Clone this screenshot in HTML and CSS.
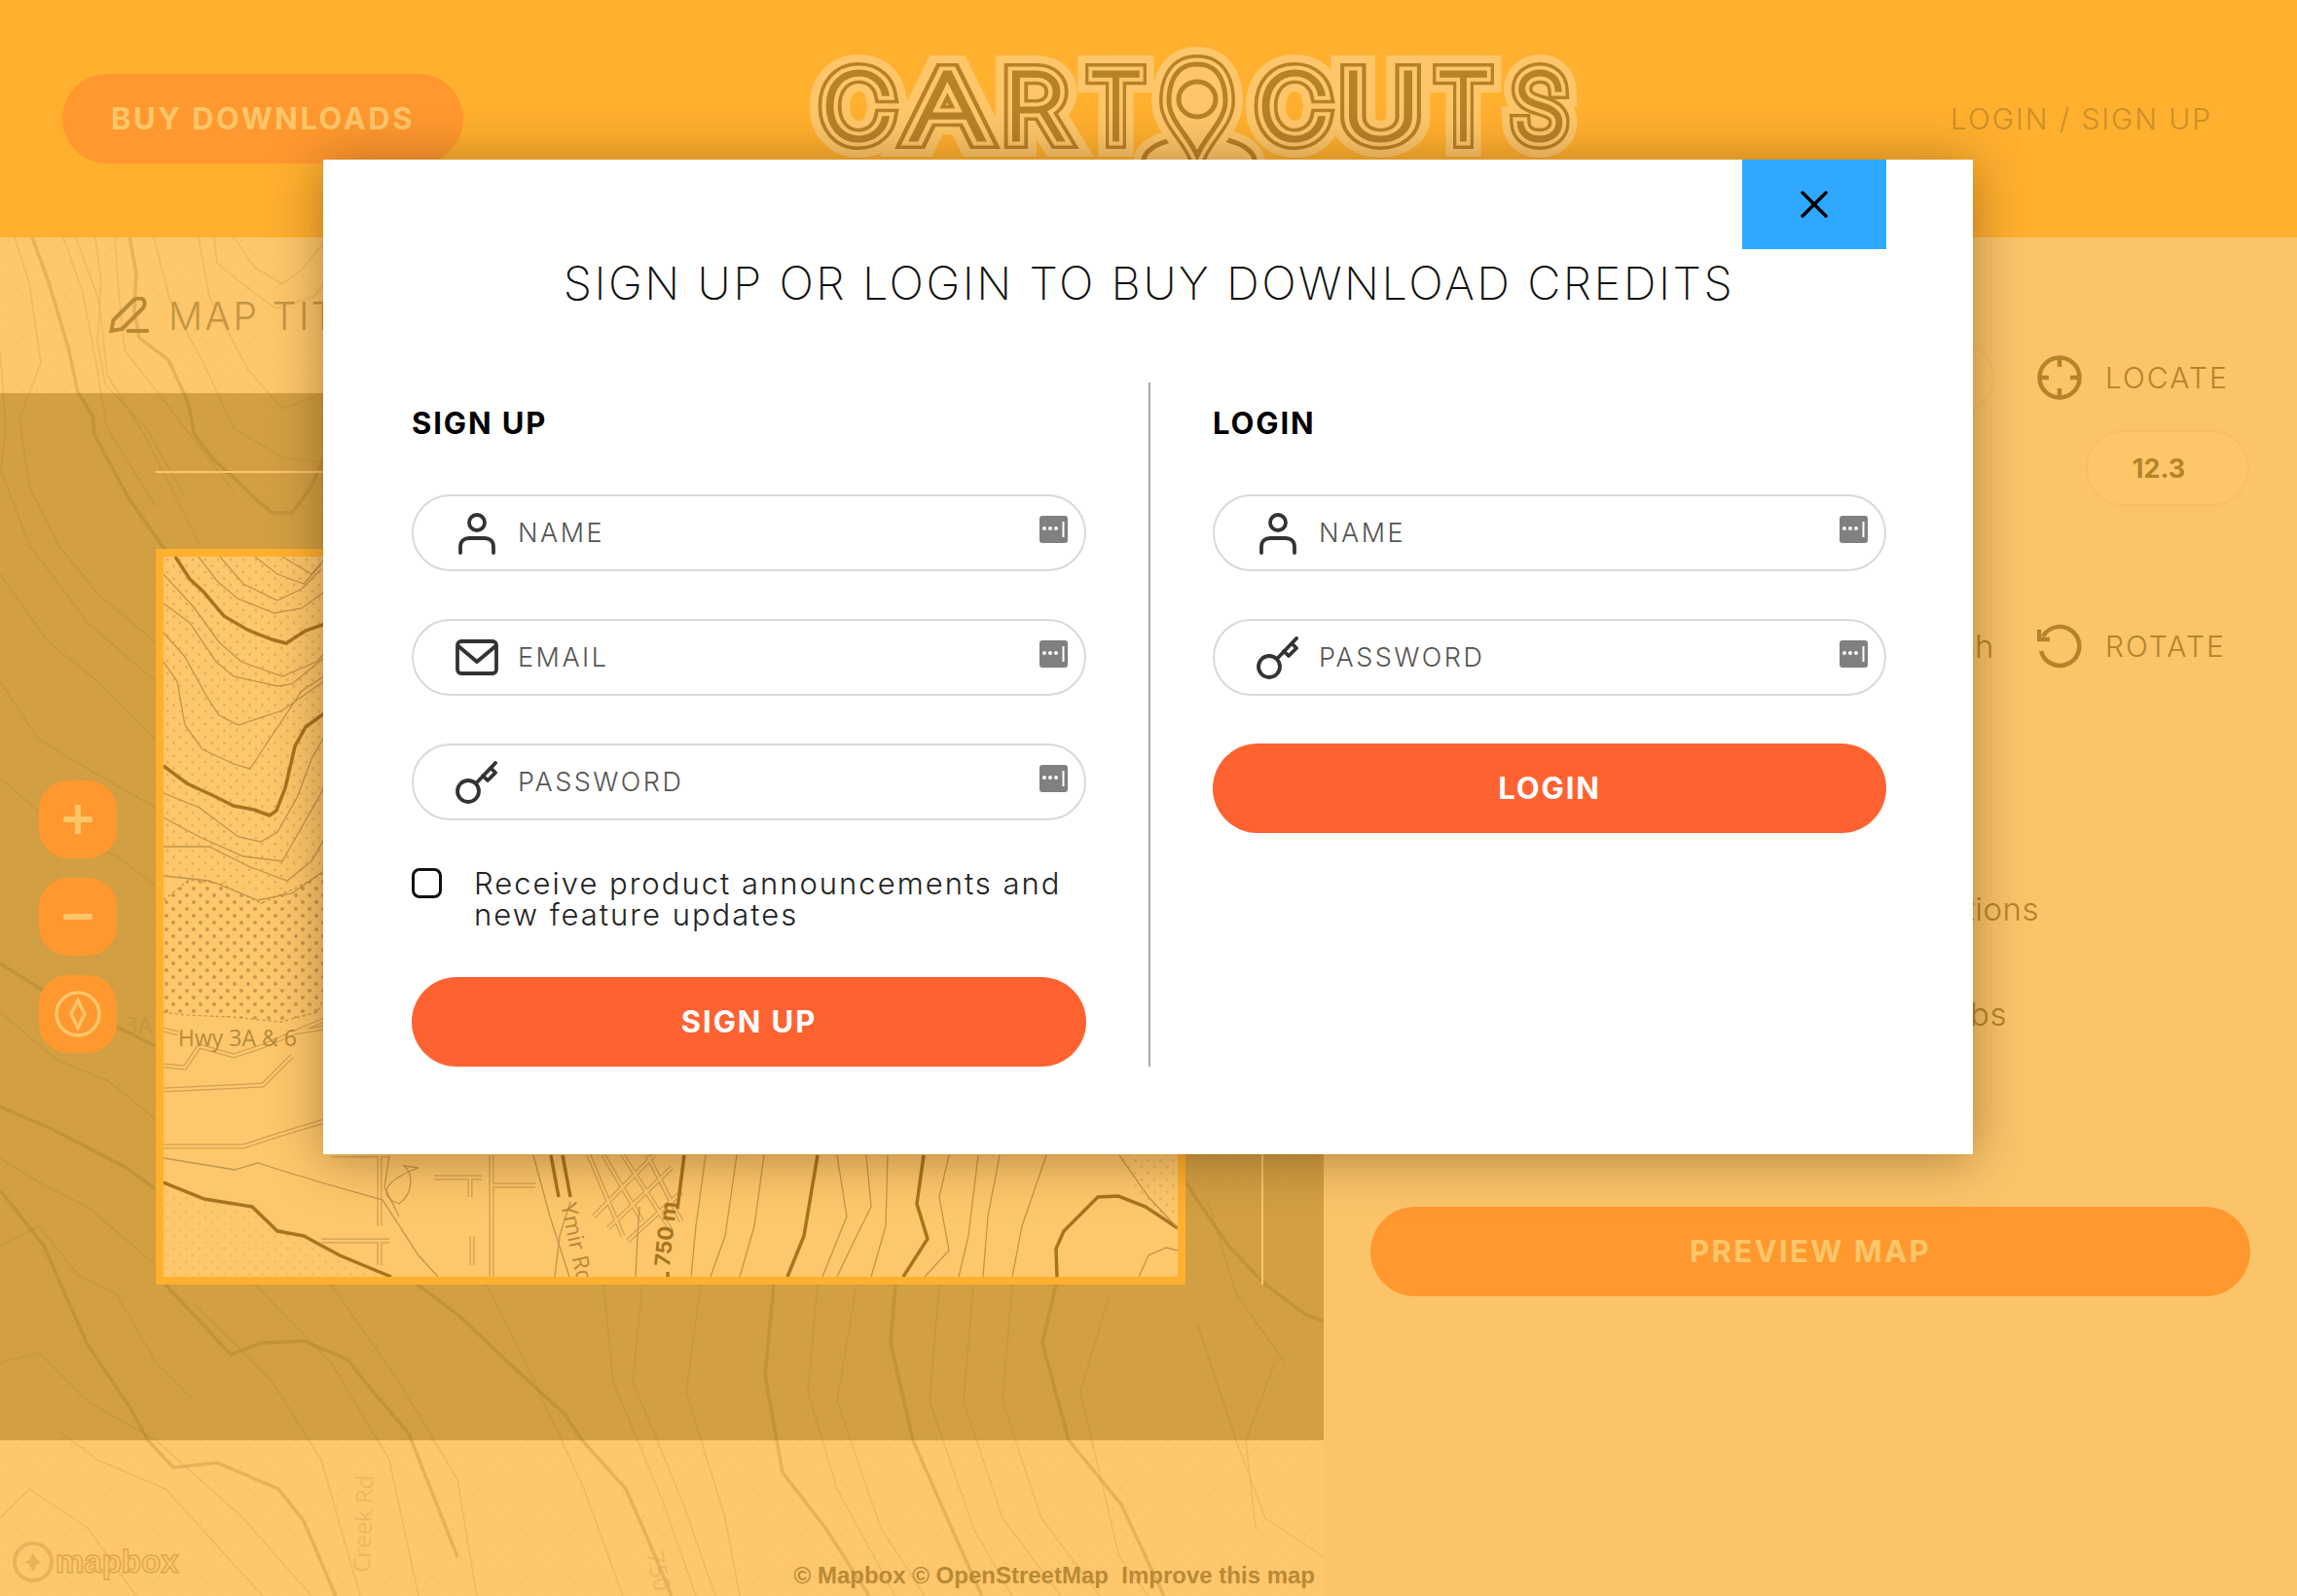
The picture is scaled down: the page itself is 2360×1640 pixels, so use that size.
FILE: index.html
```html
<!DOCTYPE html>
<html lang="en">
<head>
  <meta charset="UTF-8" />
  <title>Cartocuts</title>
  <link rel="stylesheet" href="styles.css">
</head>
<body>
<div class="app">

  <header class="topbar">
    <a class="buy-btn">BUY DOWNLOADS</a>
    <svg class="logo" viewBox="820 40 820 134" role="img" aria-label="Cartocuts">
      <defs>
        <g id="logo-word">
          <text x="844" y="143" textLength="74" lengthAdjust="spacingAndGlyphs">C</text>
          <text x="934" y="143" textLength="79" lengthAdjust="spacingAndGlyphs">A</text>
          <text x="1031" y="143" textLength="64" lengthAdjust="spacingAndGlyphs">R</text>
          <text x="1119" y="143" textLength="55" lengthAdjust="spacingAndGlyphs">T</text>
          <text x="1292" y="143" textLength="74" lengthAdjust="spacingAndGlyphs">C</text>
          <text x="1378" y="143" textLength="81" lengthAdjust="spacingAndGlyphs">U</text>
          <text x="1476" y="143" textLength="55" lengthAdjust="spacingAndGlyphs">T</text>
          <text x="1554" y="143" textLength="56" lengthAdjust="spacingAndGlyphs">S</text>
        </g>
        <path id="logo-pin" d="M1230 66C1204 66 1201 92 1201 104C1201 124 1222 140 1230 160C1238 140 1259 124 1259 104C1259 92 1256 66 1230 66Z"/>
      </defs>
      <ellipse class="ring-halo" cx="1232" cy="168" rx="50" ry="20"/>
      <ellipse class="ring-dark" cx="1232" cy="168" rx="50" ry="20"/>
      <ellipse class="ring-core" cx="1232" cy="168" rx="50" ry="20"/>
      <use href="#logo-word" class="ring-halo"/>
      <use href="#logo-word" class="ring-dark"/>
      <use href="#logo-word" class="ring-light"/>
      <use href="#logo-word" class="ring-line"/>
      <use href="#logo-pin" class="ring-halo"/>
      <use href="#logo-pin" class="ring-dark"/>
      <use href="#logo-pin" class="ring-light"/>
      <use href="#logo-pin" class="ring-line"/>
      <ellipse class="pin-eye" cx="1230" cy="102" rx="19" ry="18"/>
    </svg>
    <a class="login-link">LOGIN / SIGN UP</a>
  </header>

  <div class="workspace">
    <section class="map-col">
      <svg class="map-bg" viewBox="0 244 1360 1396" preserveAspectRatio="none">
        <defs>
          <pattern id="fine-dots" width="14" height="14" patternUnits="userSpaceOnUse">
            <circle cx="3" cy="3" r="1.3" fill="#e8b05a"/>
            <circle cx="10" cy="10" r="1.3" fill="#e8b05a"/>
          </pattern>
        </defs>
        <rect x="0" y="244" width="1360" height="1396" fill="url(#fine-dots)" opacity=".2"/>
        <g class="contour-thick">
          <path d="M33 244L50 290 70 357 80 403 95 427 97 447 133 513 173 570"/>
          <path d="M133 244L140 280 138 320 143 347 173 370 193 413 200 447 220 473 247 497 267 517 280 527 300 527 320 500 340 455"/>
          <path d="M0 1223L45 1280 89 1380 134 1447 152 1480 178 1508 223 1503 286 1530 312 1563 345 1640"/>
          <path d="M170 1320L214 1367 237 1392 268 1380 312 1378 357 1397 375 1420 420 1473 470 1600"/>
          <path d="M429 1320L473 1353 536 1413 580 1453 598 1480 643 1530 665 1580 690 1640"/>
          <path d="M795 1320L786 1413 804 1513 848 1570 893 1640"/>
          <path d="M920 1320L915 1380 938 1480 982 1580 1009 1640"/>
          <path d="M1085 1320L1071 1380 1098 1480 1152 1546 1196 1640"/>
          <path d="M0 1137L53 1160 130 1200 160 1222"/>
          <path d="M0 990L43 1017 110 1050 160 1075"/>
          <path d="M1218 1215L1262 1280 1300 1320 1340 1350 1360 1358"/>
        </g>
        <g class="contour-thin">
          <path d="M15 244L30 290 42 373 20 430 30 500 60 560 100 610 160 660"/>
          <path d="M65 244L85 300 100 380 110 440 160 520"/>
          <path d="M78 244L102 310 110 385 150 450 205 560"/>
          <path d="M98 244L104 290 100 350 108 395 150 440 190 510"/>
          <path d="M118 244L122 300 128 360 175 420 240 505"/>
          <path d="M158 244L175 310 210 375 240 440 290 470 330 475"/>
          <path d="M204 244L215 305 255 380 290 420 330 405"/>
          <path d="M220 244L223 270 247 290 283 317 322 305 340 285"/>
          <path d="M240 244L262 275 290 292 312 275 332 250"/>
          <path d="M0 360L6 440 -4 520"/>
          <path d="M0 480L30 560 90 640 160 700"/>
          <path d="M0 590L50 660 100 700 160 760"/>
          <path d="M0 700L40 760 90 790 160 830"/>
          <path d="M0 800L60 850 120 880 160 910"/>
          <path d="M0 1040L60 1090 110 1110 160 1150"/>
          <path d="M0 1190L40 1215 90 1240 160 1300"/>
          <path d="M0 1280L40 1260 80 1310 120 1330 160 1400 200 1440"/>
          <path d="M0 1400L40 1390 90 1440 160 1480 250 1560 320 1640"/>
          <path d="M60 1470L100 1500 170 1530 270 1640"/>
          <path d="M0 1560L30 1530 90 1570 140 1640"/>
          <path d="M200 1340L280 1420 330 1500 370 1640"/>
          <path d="M262 1320L340 1400 400 1500 430 1640"/>
          <path d="M340 1320L410 1420 470 1520 490 1640"/>
          <path d="M500 1320L540 1400 600 1530 640 1640"/>
          <path d="M620 1320L630 1420 680 1540 715 1640"/>
          <path d="M660 1320L650 1420 700 1540 735 1640"/>
          <path d="M720 1320L705 1430 745 1560 760 1640"/>
          <path d="M840 1320L830 1430 860 1530 920 1640"/>
          <path d="M880 1320L860 1440 905 1570 950 1640"/>
          <path d="M965 1320L955 1440 1000 1570 1040 1640"/>
          <path d="M1000 1320L990 1440 1030 1560 1090 1640"/>
          <path d="M1040 1320L1030 1440 1070 1560 1130 1640"/>
          <path d="M1140 1330L1110 1430 1150 1600 1180 1640"/>
          <path d="M1230 1360L1270 1480 1300 1560 1360 1600"/>
          <path d="M1310 1400L1280 1480 1290 1570"/>
          <path d="M1240 1230L1270 1330 1320 1400"/>
        </g>
        <text class="ghost-label" transform="translate(380 1616) rotate(-88)">Creek Rd</text>
        <text class="ghost-label" transform="translate(664 1596) rotate(78)">750 m</text>
        <text class="ghost-label" x="128" y="1062">3A</text>
      </svg>

      <div class="title-bar">
        <svg class="pen-icon" viewBox="0 0 40 38">
          <path d="M2 35L4 24 24 4C27 1 33 1 35 3 37 6 36 10 34 12L13 33Z"/>
          <path d="M19 35H39"/>
        </svg>
        <span class="map-title">MAP TITLE</span>
      </div>

      <div class="stage">
        <div class="guides">
          <div class="frame">
            <svg class="frame-map" viewBox="168 572 1042 740" preserveAspectRatio="none">
              <defs>
                <pattern id="sparse-dots" width="13" height="13" patternUnits="userSpaceOnUse">
                  <circle cx="3" cy="3" r="1.5" fill="#e6b058"/>
                  <circle cx="9.500" cy="9.500" r="1.5" fill="#e6b058"/>
                </pattern>
                <pattern id="dense-dots" width="14" height="14" patternUnits="userSpaceOnUse">
                  <circle cx="3" cy="3" r="2" fill="#c9984a"/>
                  <circle cx="10" cy="10" r="2" fill="#c9984a"/>
                </pattern>
              </defs>
              <path d="M168 572H340V880L290 920 168 900Z" fill="url(#sparse-dots)"/>
              <path d="M168 925L194 904 227 908 268 928 303 913 340 893V1010L326 1040 289 1050 237 1045 190 1043 168 1040Z" fill="url(#dense-dots)"/>
              <path class="dash-edge" d="M168 925L194 904 227 908 268 928 303 913 340 893M168 1040L190 1043 237 1045 289 1050 326 1040 340 1010"/>
              <path d="M168 1220L260 1245 340 1290 400 1312H168Z" fill="url(#sparse-dots)" opacity=".5"/>
              <path d="M1150 1187L1210 1187V1262L1175 1240Z" fill="url(#sparse-dots)" opacity=".8"/>

              <g class="road">
                <path d="M168 1058L183 1062M296 1062L340 1055"/>
                <path d="M168 1095L190 1097 205 1075 240 1085 270 1075 340 1045"/>
                <path d="M168 1120L270 1115 300 1085M168 1178L250 1178 290 1165 340 1150"/>
                <path d="M340 1187H400M390 1187V1260M330 1275H400M390 1275V1300"/>
                <path d="M446 1210H495M483 1210V1230M505 1187V1312M505 1218H550M485 1270V1300"/>
                <path d="M605 1187L640 1270M620 1187L660 1255M640 1187L690 1265M665 1187L700 1255M610 1250L672 1187M625 1262L690 1200M645 1275L700 1225"/>
              </g>
              <g class="road-fill">
                <path d="M168 1058L183 1062M296 1062L340 1055"/>
                <path d="M168 1095L190 1097 205 1075 240 1085 270 1075 340 1045"/>
                <path d="M168 1120L270 1115 300 1085M168 1178L250 1178 290 1165 340 1150"/>
                <path d="M340 1187H400M390 1187V1260M330 1275H400M390 1275V1300"/>
                <path d="M446 1210H495M483 1210V1230M505 1187V1312M505 1218H550M485 1270V1300"/>
                <path d="M605 1187L640 1270M620 1187L660 1255M640 1187L690 1265M665 1187L700 1255M610 1250L672 1187M625 1262L690 1200M645 1275L700 1225"/>
              </g>

              <g class="line-thick">
                <path d="M180 572L195 595 209 608 230 633 254 647 279 657 294 661 314 648 340 639"/>
                <path d="M168 787L192 805 220 818 240 828 261 832 277 838 284 833 293 810 303 767 314 747 340 728"/>
                <path d="M168 1215L210 1232 259 1240 285 1265 312 1270 349 1290 402 1312"/>
                <path d="M840 1187L826 1270 809 1312"/>
                <path d="M949 1187L942 1237 953 1273 928 1312"/>
                <path d="M703 1187L696 1242M686 1307V1312"/>
                <path d="M1086 1312L1085 1283 1093 1265 1128 1230 1149 1229 1177 1240 1210 1262"/>
                <path d="M566 1187L574 1230M578 1187L586 1230"/>
              </g>
              <g class="line-thin">
                <path d="M204 572L223 597 244 615 282 630 310 625 340 603"/>
                <path d="M226 572L250 600 285 617 310 605 330 585"/>
                <path d="M262 572L285 590 312 600 330 580"/>
                <path d="M290 572L320 590 332 576"/>
                <path d="M168 590L200 625 225 660 248 680 290 695 325 680 340 665"/>
                <path d="M168 620L195 640 222 680 240 695 285 705 300 703 340 670"/>
                <path d="M168 650L190 675 212 715 225 735 245 745 290 730 340 695"/>
                <path d="M168 680L182 700 190 745 208 770 240 785 257 790 270 770 310 710 340 690"/>
                <path d="M168 815L205 830 245 860 268 865 285 855 305 820 320 780 340 745"/>
                <path d="M168 840L205 860 250 880 290 885 310 850 330 815 340 790"/>
                <path d="M168 870L215 870 255 890 295 905 320 885 340 850"/>
                <path d="M168 900L215 905 265 925 300 918 340 890"/>
                <path d="M168 1190L241 1202 265 1195 290 1203 330 1215 393 1233 430 1290 450 1312"/>
                <path d="M400 1187L395 1220 410 1250"/>
                <path d="M430 1200C390 1215 390 1230 410 1237 426 1225 424 1205 415 1198Z"/>
                <path d="M548 1187L565 1250 585 1312"/>
                <path d="M586 1235L575 1270 570 1312"/>
                <path d="M657 1240L655 1270 653 1312"/>
                <path d="M725 1187L715 1260 710 1312"/>
                <path d="M757 1187L745 1270 730 1312"/>
                <path d="M785 1187L775 1260 760 1312"/>
                <path d="M860 1187L870 1250 845 1312"/>
                <path d="M890 1187L895 1240 880 1270 860 1312"/>
                <path d="M912 1187L910 1260 895 1312"/>
                <path d="M975 1187L965 1230 975 1285 950 1312"/>
                <path d="M1005 1187L995 1270 985 1312"/>
                <path d="M1027 1187L1015 1250 1010 1312"/>
                <path d="M1075 1187L1050 1260 1040 1312"/>
                <path d="M1150 1187L1180 1230 1210 1262"/>
                <path d="M1170 1312L1180 1290 1198 1282 1210 1285"/>
              </g>
              <text class="road-label" x="183" y="1075">Hwy 3A &amp; 6</text>
              <text class="road-label" transform="translate(576 1238) rotate(78)">Ymir Rd</text>
              <text class="elev-label" transform="translate(688 1302) rotate(-84)">750 m</text>
            </svg>
          </div>
        </div>

        <div class="zoom-controls">
          <button class="zoom-btn">
            <svg viewBox="0 0 30 30"><path d="M15 2V28M2 15H28"/></svg>
          </button>
          <button class="zoom-btn">
            <svg viewBox="0 0 30 30"><path d="M2 15H28"/></svg>
          </button>
          <button class="zoom-btn">
            <svg class="compass" viewBox="0 0 48 48">
              <circle cx="24" cy="24" r="22"/>
              <path d="M24 10L31 24 24 38 17 24Z"/>
            </svg>
          </button>
        </div>
      </div>

      <div class="map-footer">
        <div class="mapbox-mark">
          <svg viewBox="0 0 44 44">
            <circle cx="22" cy="22" r="20"/>
            <path d="M22 12L26 20 31 22 26 25 22 33 18 25 13 22 18 20Z"/>
          </svg>
          <span>mapbox</span>
        </div>
        <div class="attribution">© Mapbox © OpenStreetMap&nbsp; Improve this map</div>
      </div>
    </section>

    <aside class="panel">
      <div class="panel-row">
        <div class="panel-input"></div>
        <div class="tool">
          <svg viewBox="0 0 46 46">
            <circle cx="23" cy="23" r="20.500"/>
            <path d="M23 2V12M23 34V44M2 23H12M34 23H44"/>
          </svg>
          <span>LOCATE</span>
        </div>
      </div>
      <div class="zoom-value">12.3</div>
      <div class="panel-row rotate-row">
        <span class="panel-text">Search</span>
        <div class="tool">
          <svg viewBox="0 0 46 46">
            <path d="M6 13A20 20 0 1 1 4 28"/>
            <path d="M2 6V16H13"/>
          </svg>
          <span>ROTATE</span>
        </div>
      </div>
      <div class="panel-text option-one">Elevations</div>
      <div class="panel-text option-two">Labs</div>
      <button class="preview-btn">PREVIEW MAP</button>
    </aside>
  </div>

  <div class="modal">
    <button class="modal-close">
      <svg viewBox="0 0 28 28"><path d="M2 2L26 26M26 2L2 26"/></svg>
    </button>
    <h1 class="modal-title">SIGN UP OR LOGIN TO BUY DOWNLOAD CREDITS</h1>
    <div class="modal-body">
      <form class="auth-col">
        <h2>SIGN UP</h2>
        <div class="auth-fields">
          <div class="field">
            <svg class="field-icon" viewBox="0 0 44 44">
              <circle cx="22" cy="11" r="8"/>
              <path d="M5 42V36C5 30 9 27 14 27H30C35 27 39 30 39 36V42"/>
            </svg>
            <span>NAME</span>
            <svg class="dots-icon" viewBox="0 0 29 28">
              <rect width="29" height="28" rx="3"/>
              <circle cx="5" cy="13" r="2"/><circle cx="11" cy="13" r="2"/><circle cx="17" cy="13" r="2"/>
              <path d="M24.500 6V22"/>
            </svg>
          </div>
          <div class="field">
            <svg class="field-icon" viewBox="0 0 44 44">
              <rect x="2" y="5" width="40" height="33" rx="4"/>
              <path d="M3 10L22 26 41 10"/>
            </svg>
            <span>EMAIL</span>
            <svg class="dots-icon" viewBox="0 0 29 28">
              <rect width="29" height="28" rx="3"/>
              <circle cx="5" cy="13" r="2"/><circle cx="11" cy="13" r="2"/><circle cx="17" cy="13" r="2"/>
              <path d="M24.500 6V22"/>
            </svg>
          </div>
          <div class="field">
            <svg class="field-icon" viewBox="0 0 44 44">
              <circle cx="13" cy="31" r="11"/>
              <path d="M21 23L41 2M28 15L33 20 41 12 36 7"/>
            </svg>
            <span>PASSWORD</span>
            <svg class="dots-icon" viewBox="0 0 29 28">
              <rect width="29" height="28" rx="3"/>
              <circle cx="5" cy="13" r="2"/><circle cx="11" cy="13" r="2"/><circle cx="17" cy="13" r="2"/>
              <path d="M24.500 6V22"/>
            </svg>
          </div>
          <label class="updates">
            <span class="check-box"></span>
            <span>Receive product announcements and<br>new feature updates</span>
          </label>
          <button type="button" class="submit-btn">SIGN UP</button>
        </div>
      </form>

      <div class="divider"></div>

      <form class="auth-col">
        <h2>LOGIN</h2>
        <div class="auth-fields">
          <div class="field">
            <svg class="field-icon" viewBox="0 0 44 44">
              <circle cx="22" cy="11" r="8"/>
              <path d="M5 42V36C5 30 9 27 14 27H30C35 27 39 30 39 36V42"/>
            </svg>
            <span>NAME</span>
            <svg class="dots-icon" viewBox="0 0 29 28">
              <rect width="29" height="28" rx="3"/>
              <circle cx="5" cy="13" r="2"/><circle cx="11" cy="13" r="2"/><circle cx="17" cy="13" r="2"/>
              <path d="M24.500 6V22"/>
            </svg>
          </div>
          <div class="field">
            <svg class="field-icon" viewBox="0 0 44 44">
              <circle cx="13" cy="31" r="11"/>
              <path d="M21 23L41 2M28 15L33 20 41 12 36 7"/>
            </svg>
            <span>PASSWORD</span>
            <svg class="dots-icon" viewBox="0 0 29 28">
              <rect width="29" height="28" rx="3"/>
              <circle cx="5" cy="13" r="2"/><circle cx="11" cy="13" r="2"/><circle cx="17" cy="13" r="2"/>
              <path d="M24.500 6V22"/>
            </svg>
          </div>
          <button type="button" class="submit-btn">LOGIN</button>
        </div>
      </form>
    </div>
  </div>

</div>
</body>
</html>
```

FILE: styles.css
```css
* {
  box-sizing: border-box;
}

body {
  margin: 0;
  font-family: Inter, "Open Sans", sans-serif;
}

button {
  font-family: inherit;
  border: none;
  cursor: pointer;
}

.app {
  position: relative;
  width: 2360px;
  height: 1640px;
  overflow: hidden;
  background: #fbc469;
}

/* top bar */
.topbar {
  display: flex;
  align-items: center;
  height: 244px;
  padding: 0 87px 0 64px;
  background: #ffb02e;
}

.buy-btn {
  display: flex;
  align-items: center;
  justify-content: center;
  width: 412px;
  height: 92px;
  padding-bottom: 2px;
  border-radius: 46px;
  background: #ff982f;
  color: #fec669;
  font-size: 31px;
  font-weight: 700;
  letter-spacing: 2.5px;
}

.logo {
  align-self: flex-start;
  width: 820px;
  height: 134px;
  margin: 40px auto 0 344px;
  overflow: visible;
}

#logo-word {
  font-family: Inter, sans-serif;
  font-size: 94px;
  font-weight: 100;
  stroke-linejoin: miter;
  stroke-miterlimit: 2;
}

.logo .ring-halo { fill: #fec669; stroke: #fec669; stroke-width: 36px; }
.logo .ring-dark { fill: #fec669; stroke: #b78128; stroke-width: 20px; }
.logo .ring-light { fill: #fec669; stroke: #fec669; stroke-width: 13px; }
.logo .ring-line { fill: #fec669; stroke: #b78128; stroke-width: 5px; }
.logo .ring-core { fill: #fec669; stroke: #fec669; stroke-width: 10px; }

.logo .pin-eye {
  fill: #fec669;
  stroke: #b78128;
  stroke-width: 5px;
}

.login-link {
  color: #cc8f2a;
  font-size: 30px;
  font-weight: 300;
  letter-spacing: 1.9px;
}

/* map side */
.workspace {
  display: flex;
  height: 1396px;
}

.map-col {
  position: relative;
  width: 1360px;
  background: #fec76b;
}

.map-bg {
  position: absolute;
  top: 0;
  left: 0;
  width: 1360px;
  height: 1396px;
}

.contour-thick, .contour-thin, .line-thick, .line-thin, .road, .road-fill {
  fill: none;
}

.contour-thick {
  stroke: #c99a45;
  stroke-width: 3.5px;
  opacity: 0.45;
}

.contour-thin {
  stroke: #c99a45;
  stroke-width: 1.5px;
  opacity: 0.3;
}

.ghost-label {
  fill: #d9a655;
  font-family: "Open Sans", sans-serif;
  font-size: 24px;
  opacity: 0.45;
}

.title-bar {
  position: relative;
  display: flex;
  align-items: center;
  gap: 20px;
  height: 160px;
  padding-left: 112px;
}

.pen-icon {
  width: 41px;
  height: 38px;
  fill: none;
  stroke: #b98a35;
  stroke-width: 4px;
  stroke-linecap: round;
}

.map-title {
  color: #c49540;
  font-size: 39px;
  font-weight: 300;
  letter-spacing: 2.5px;
  white-space: nowrap;
}

.stage {
  position: relative;
  height: 1076px;
  padding-top: 80px;
  background: rgba(146, 100, 5, 0.4);
}

.guides {
  height: 836px;
  margin: 0 62px 0 160px;
  padding-top: 78px;
  border-top: 2px solid #fbc66e;
  border-right: 2px solid #fbc66e;
}

.frame {
  width: 1058px;
  height: 756px;
  border: 8px solid #ffb02e;
  background: #fec76b;
}

.frame-map {
  display: block;
  width: 1042px;
  height: 740px;
}

.line-thick {
  stroke: #a8741f;
  stroke-width: 3.5px;
}

.line-thin {
  stroke: #c2954a;
  stroke-width: 1.3px;
}

.road {
  stroke: #cfa152;
  stroke-width: 5px;
}

.road-fill {
  stroke: #fec76b;
  stroke-width: 2.500px;
}

.dash-edge {
  fill: none;
  stroke: #c2954a;
  stroke-width: 1.3px;
  stroke-dasharray: 3 3;
}

.road-label {
  fill: #b78a3a;
  font-family: "Open Sans", sans-serif;
  font-size: 23px;
}

.elev-label {
  fill: #a8741f;
  font-family: Inter, sans-serif;
  font-size: 22px;
  font-weight: 700;
}

.zoom-controls {
  position: absolute;
  top: 398px;
  left: 40px;
  display: flex;
  flex-direction: column;
  gap: 20px;
}

.zoom-btn {
  display: flex;
  align-items: center;
  justify-content: center;
  width: 80px;
  height: 80px;
  padding: 0;
  border-radius: 30px;
  background: #ff982f;
}

.zoom-btn svg {
  width: 30px;
  height: 30px;
  fill: none;
  stroke: #fec669;
  stroke-width: 6px;
  stroke-linecap: round;
}

.zoom-btn .compass {
  width: 48px;
  height: 48px;
  stroke-width: 3.5px;
}

.map-footer {
  position: relative;
  display: flex;
  align-items: flex-end;
  justify-content: space-between;
  height: 160px;
  padding: 0 9px 7px 13px;
}

.mapbox-mark {
  display: flex;
  align-items: center;
  gap: 2px;
  color: #fec669;
  font-family: "Liberation Sans", sans-serif;
  font-size: 33px;
  font-weight: 700;
  -webkit-text-stroke: 1.5px #dfa84f;
  margin-bottom: 6px;
}

.mapbox-mark svg {
  width: 42px;
  height: 44px;
  fill: none;
  stroke: #e8b15a;
  stroke-width: 4px;
}

.mapbox-mark path {
  fill: #e8b15a;
  stroke: none;
}

.attribution {
  color: #b98a35;
  font-family: "Liberation Sans", sans-serif;
  font-size: 24px;
  font-weight: 700;
  white-space: nowrap;
}

/* right panel */
.panel {
  display: flex;
  flex-direction: column;
  width: 1000px;
  padding: 108px 48px 308px;
  color: #b5832a;
}

.panel-row {
  display: flex;
  align-items: center;
  justify-content: flex-end;
  gap: 44px;
}

.panel-input {
  flex: 1;
  height: 72px;
  border: 2px solid #f7bf62;
  border-radius: 36px;
  background: #fec669;
}

.tool {
  display: flex;
  align-items: center;
  gap: 24px;
  width: 219px;
  height: 56px;
  font-size: 30px;
  font-weight: 300;
  letter-spacing: 2px;
}

.tool svg {
  flex: none;
  width: 46px;
  height: 46px;
  fill: none;
  stroke: #b5832a;
  stroke-width: 4.500px;
}

.zoom-value {
  display: flex;
  align-items: center;
  justify-content: center;
  width: 168px;
  height: 78px;
  margin: 18px 1px 0 auto;
  padding-right: 18px;
  border: 2px solid #f7bf62;
  border-radius: 39px;
  background: #fec669;
  font-size: 27px;
  font-weight: 700;
}

.rotate-row {
  margin-top: 116px;
}

.panel-text {
  font-size: 33px;
  font-weight: 300;
  letter-spacing: 0.5px;
  white-space: nowrap;
}

.option-one {
  margin: 222px 217px 0 0;
  text-align: right;
}

.option-two {
  margin: 68px 250px 0 0;
  text-align: right;
}

.preview-btn {
  height: 92px;
  margin-top: auto;
  padding-bottom: 3px;
  border-radius: 46px;
  background: #ff982f;
  color: #fec669;
  font-size: 31px;
  font-weight: 700;
  letter-spacing: 2.4px;
}

/* login modal */
.modal {
  position: absolute;
  top: 164px;
  left: 332px;
  width: 1695px;
  height: 1022px;
  padding: 0 89px 0 91px;
  background: #fff;
  box-shadow: 0 4px 50px rgba(60, 30, 0, 0.4);
}

.modal-close {
  position: absolute;
  top: 0;
  right: 89px;
  display: flex;
  align-items: center;
  justify-content: center;
  width: 148px;
  height: 92px;
  padding: 0;
  background: #2fa8ff;
}

.modal-close svg {
  width: 28px;
  height: 28px;
  fill: none;
  stroke: #000;
  stroke-width: 3.500px;
  stroke-linecap: round;
}

.modal-title {
  height: 229px;
  margin: 0;
  padding-top: 97px;
  color: #111;
  font-size: 47px;
  font-weight: 200;
  line-height: 60px;
  text-align: center;
  white-space: nowrap;
  letter-spacing: 2.5px;
}

.modal-body {
  display: grid;
  grid-template-columns: 693px 2px 692px;
  column-gap: 64px;
  height: 703px;
}

.auth-col h2 {
  height: 84px;
  margin: 0 0 31px;
  color: #000;
  font-size: 31px;
  font-weight: 700;
  line-height: 84px;
  letter-spacing: 1.9px;
}

.auth-fields {
  display: flex;
  flex-direction: column;
  gap: 49px;
}

.field {
  display: flex;
  align-items: center;
  gap: 20px;
  height: 79px;
  padding: 0 17px 0 43px;
  border: 2px solid #d9d9d9;
  border-radius: 40px;
  color: #555;
  font-size: 27px;
  font-weight: 300;
  letter-spacing: 2.5px;
}

.field-icon {
  flex: none;
  width: 44px;
  height: 44px;
  fill: none;
  stroke: #333;
  stroke-width: 3.800px;
  stroke-linecap: round;
  stroke-linejoin: round;
}

.dots-icon {
  width: 29px;
  height: 28px;
  margin: 0 0 7px auto;
  fill: #808080;
}

.dots-icon circle {
  fill: #fff;
}

.dots-icon path {
  stroke: #fff;
  stroke-width: 2px;
}

.updates {
  display: flex;
  align-items: flex-start;
  gap: 33px;
  height: 63px;
  color: #222;
  font-size: 31px;
  font-weight: 300;
  line-height: 32px;
  letter-spacing: 2px;
}

.check-box {
  flex: none;
  width: 31px;
  height: 31px;
  border: 3px solid #111;
  border-radius: 8px;
}

.submit-btn {
  height: 92px;
  padding-bottom: 3px;
  border-radius: 46px;
  background: #ff6231;
  color: #fff;
  font-size: 31px;
  font-weight: 700;
  letter-spacing: 1.9px;
}

.divider {
  background: #aaa;
}
```
